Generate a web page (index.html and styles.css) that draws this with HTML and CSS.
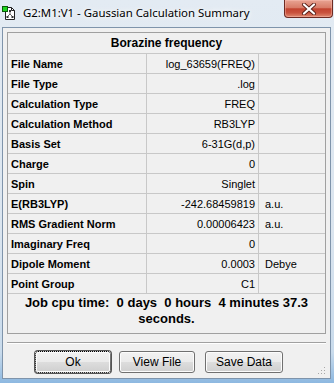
FILE: index.html
```html
<!DOCTYPE html>
<html lang="en">
<head>
    <meta charset="UTF-8">
    <title>G2:M1:V1 - Gaussian Calculation Summary</title>
    <link rel="stylesheet" href="styles.css">
</head>
<body>

<div class="window">
    <div class="titlebar">
        <svg class="app-icon" width="14" height="14" viewBox="0 0 14 14">
            <path d="M3.5 1.5h6l3 3v9h-9z" fill="#fff" stroke="#222"/>
            <path d="M9.5 1.5v3h3" fill="none" stroke="#222"/>
            <path d="M8 5v3M8 8l-2.5 2.5M8 8l2.5 2.5" stroke="#666" stroke-width="1"/>
            <rect x="7" y="4" width="2" height="2" fill="#333"/>
            <rect x="4.5" y="10" width="2" height="2" fill="#333"/>
            <rect x="9.5" y="10" width="2" height="2" fill="#333"/>
            <rect x="0.5" y="0.5" width="5" height="5" fill="#1ed41e" stroke="#0a5a0a"/>
        </svg>
        <span class="title">G2:M1:V1 - Gaussian Calculation Summary</span>
        <div class="close-btn">
            <svg width="16" height="12" viewBox="0 0 16 12">
                <path d="M3 1.5l10 9M13 1.5l-10 9" stroke="#5a2018" stroke-width="4" stroke-linecap="round"/>
                <path d="M3 1.5l10 9M13 1.5l-10 9" stroke="#fff" stroke-width="2.2" stroke-linecap="round"/>
            </svg>
        </div>
    </div>

    <div class="client">
        <table class="summary">
            <colgroup>
                <col class="c-label">
                <col class="c-value">
                <col class="c-unit">
            </colgroup>
            <tr><th colspan="3">Borazine frequency</th></tr>
            <tr><td class="label">File Name</td><td class="value">log_63659(FREQ)</td><td class="unit"></td></tr>
            <tr><td class="label">File Type</td><td class="value">.log</td><td class="unit"></td></tr>
            <tr><td class="label">Calculation Type</td><td class="value">FREQ</td><td class="unit"></td></tr>
            <tr><td class="label">Calculation Method</td><td class="value">RB3LYP</td><td class="unit"></td></tr>
            <tr><td class="label">Basis Set</td><td class="value">6-31G(d,p)</td><td class="unit"></td></tr>
            <tr><td class="label">Charge</td><td class="value">0</td><td class="unit"></td></tr>
            <tr><td class="label">Spin</td><td class="value">Singlet</td><td class="unit"></td></tr>
            <tr><td class="label">E(RB3LYP)</td><td class="value">-242.68459819</td><td class="unit">a.u.</td></tr>
            <tr><td class="label">RMS Gradient Norm</td><td class="value">0.00006423</td><td class="unit">a.u.</td></tr>
            <tr><td class="label">Imaginary Freq</td><td class="value">0</td><td class="unit"></td></tr>
            <tr><td class="label">Dipole Moment</td><td class="value">0.0003</td><td class="unit">Debye</td></tr>
            <tr><td class="label">Point Group</td><td class="value">C1</td><td class="unit"></td></tr>
            <tr><td class="cpu" colspan="3">Job cpu time:&nbsp; 0 days&nbsp; 0 hours&nbsp; 4 minutes 37.3 seconds.</td></tr>
        </table>

        <div class="separator"></div>

        <div class="buttons">
            <button class="btn btn-ok">Ok</button>
            <button class="btn btn-view">View File</button>
            <button class="btn btn-save">Save Data</button>
        </div>

        <svg class="grip" width="9" height="9" viewBox="0 0 9 9">
            <rect x="7" y="1" width="1" height="1" fill="#a8a8a8"/>
            <rect x="4" y="4" width="1" height="1" fill="#a8a8a8"/>
            <rect x="7" y="4" width="1" height="1" fill="#a8a8a8"/>
            <rect x="1" y="7" width="1" height="1" fill="#a8a8a8"/>
            <rect x="4" y="7" width="1" height="1" fill="#a8a8a8"/>
            <rect x="7" y="7" width="1" height="1" fill="#a8a8a8"/>
        </svg>
    </div>
</div>

</body>
</html>
```

FILE: styles.css
```css
html, body {
    margin: 0;
    padding: 0;
}

body {
    width: 334px;
    height: 383px;
    overflow: hidden;
    font-family: 'Liberation Sans', Arial, sans-serif;
}

.window {
    width: 334px;
    height: 383px;
    box-sizing: border-box;
    padding: 0 3px 4px 2px;
    background: linear-gradient(to bottom, #e3ebf3 0%, #dbe5ef 60%, #c9dbec 92%, #8db8e0 100%);
}

.titlebar {
    height: 27px;
    display: flex;
    align-items: flex-start;
    margin-right: -3px;
}

.app-icon {
    margin: 6px 0 0 0;
    flex-shrink: 0;
}

.title {
    margin: 5px 0 0 7px;
    font-family: 'Noto Sans', 'Open Sans', sans-serif;
    font-size: 11.4px;
    color: #000;
    text-shadow: 0 0 8px #fff, 0 0 4px #fff;
    white-space: nowrap;
    flex: 1;
}

.close-btn {
    width: 47px;
    height: 17px;
    margin-right: 1px;
    border: 1px solid #6d2a22;
    border-top: none;
    border-radius: 0 0 4px 4px;
    background: linear-gradient(to bottom, #e8a493 0%, #d87c68 45%, #c2432f 52%, #c9523d 75%, #df8a70 100%);
    display: flex;
    justify-content: center;
    align-items: center;
    box-shadow: inset 0 0 0 1px rgba(255, 200, 190, 0.4);
}

.client {
    position: relative;
    height: 352px;
    border: 1px solid #7f94ab;
    background: #f0f0f0;
    padding: 4px 4px 5px 4px;
    box-sizing: border-box;
}

.summary {
    width: 319px;
    border-collapse: separate;
    border-spacing: 0;
    border: 1px solid #a0a0a0;
    table-layout: fixed;
    font-size: 11px;
    color: #000;
}

.c-label { width: 139px; }
.c-value { width: 112px; }
.c-unit  { width: 66px; }

.summary th {
    height: 20px;
    padding: 0;
    font-size: 12px;
    font-weight: bold;
    text-align: center;
    border-bottom: 1px solid #c8c8c8;
}

.summary td {
    padding: 1px 0 0 0;
    box-sizing: border-box;
    height: 20px;
    border-bottom: 1px solid #c8c8c8;
    white-space: nowrap;
    overflow: hidden;
}

.summary td.label {
    font-weight: bold;
    padding-left: 3px;
    border-right: 1px solid #c8c8c8;
}

.summary td.value {
    text-align: right;
    padding-right: 3px;
    border-right: 1px solid #c8c8c8;
}

.summary td.unit {
    padding-left: 6px;
}

.summary td.cpu {
    height: 39px;
    border-bottom: none;
    padding: 1px 2px 0;
    font-size: 13px;
    font-weight: bold;
    line-height: 16px;
    text-align: center;
    white-space: normal;
    vertical-align: top;
}

.separator {
    margin-top: 8px;
    height: 1px;
    width: 319px;
    background: #a0a0a0;
    border-bottom: 1px solid #fff;
}

.buttons {
    display: flex;
    margin-top: 7px;
    padding-left: 28px;
    gap: 8px;
}

.btn {
    height: 22px;
    padding: 0;
    font-family: 'Liberation Sans', Arial, sans-serif;
    font-size: 12px;
    color: #000;
    border: 1px solid #707070;
    border-radius: 3px;
    background: linear-gradient(to bottom, #f2f2f2 0%, #ebebeb 48%, #dddddd 52%, #cfcfcf 100%);
    box-shadow: inset 0 0 0 1px #fcfcfc;
}

.btn-ok {
    width: 76px;
    border: 1px dotted #000;
    box-shadow: 0 0 0 1px #555, inset 0 0 0 1px #fcfcfc;
}

.btn-view {
    width: 76px;
}

.btn-save {
    width: 78px;
    margin-left: 2px;
}

.grip {
    position: absolute;
    right: 4px;
    bottom: 3px;
}
```
